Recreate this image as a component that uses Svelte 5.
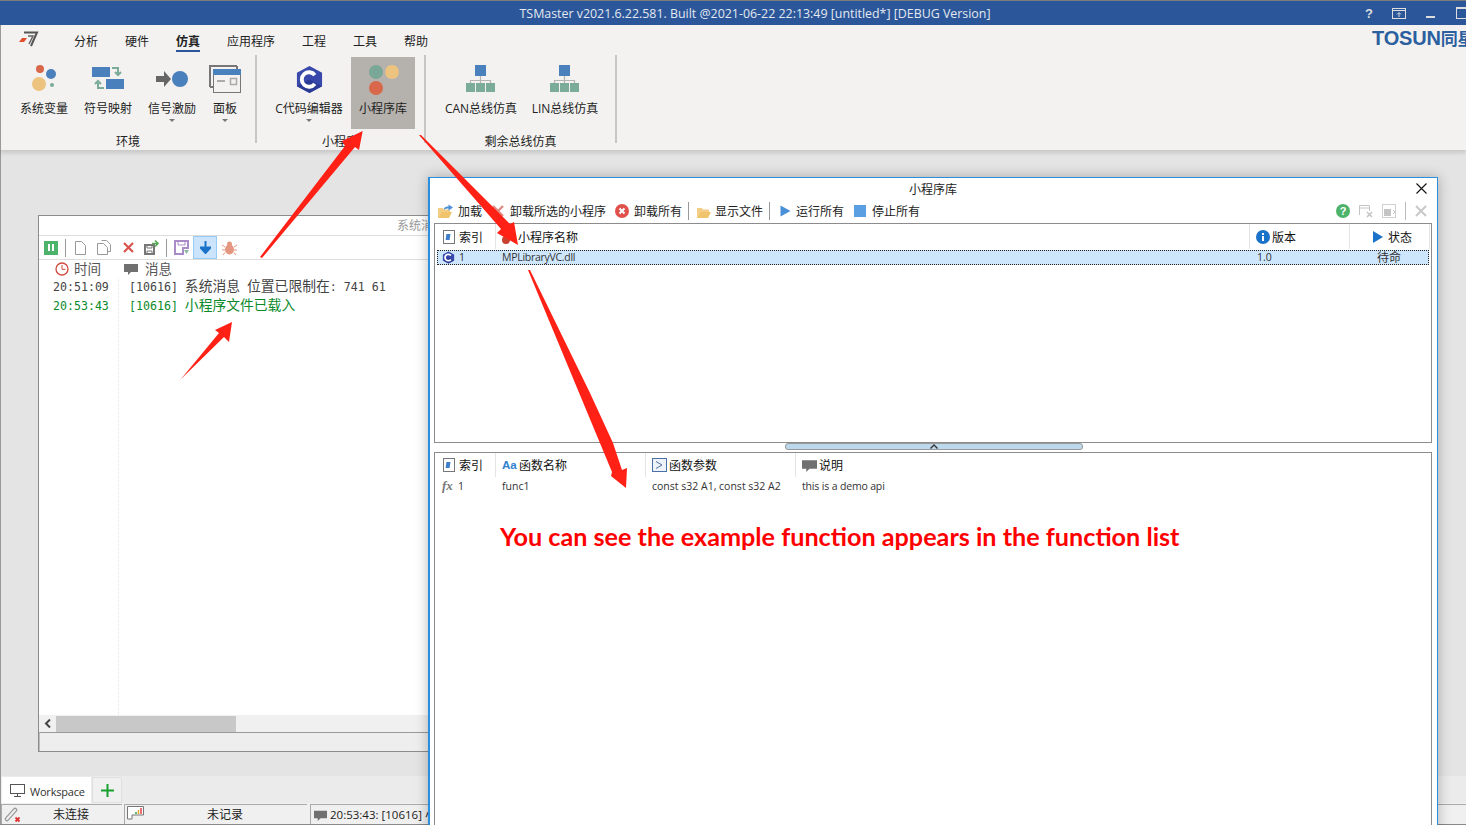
<script>
  const menu = ['分析', '硬件', '仿真', '应用程序', '工程', '工具', '帮助']
</script>

{#snippet network()}
  <svg class="ricon" viewBox="0 0 40 38">
    <path d="M19.5 16v7M9.5 27v-6.500h20V27M19.500 21v6" fill="none" stroke="#b4b4b4" stroke-width="1.200"/>
    <rect x="14" y="5" width="11" height="11" fill="#4a80bb"/>
    <rect x="5" y="23" width="9" height="9" fill="#7bab99"/>
    <rect x="15" y="23" width="9" height="9" fill="#7bab99"/>
    <rect x="25" y="23" width="9" height="9" fill="#7bab99"/>
  </svg>
{/snippet}

{#snippet cbadge(size)}
  <svg width={size} height={size} viewBox="0 0 28 30">
    <path d="M14 1l13 7v14l-13 7-13-7V8z" fill="#3949ab"/>
    <path d="M14 15l13 7-13 7-13-7z" fill="#2b3a94"/>
    <path d="M19.500 10.500A7.500 7.500 0 1 0 19.500 19.500" fill="none" stroke="#fff" stroke-width="4"/>
  </svg>
{/snippet}

{#snippet indexicon()}
  <svg width="12" height="14" viewBox="0 0 12 14">
    <rect x="0.500" y="0.500" width="11" height="13" fill="#fff" stroke="#777"/>
    <rect x="4" y="4" width="4" height="6" fill="#3f7fc9" transform="skewX(-8)"/>
  </svg>
{/snippet}

{#snippet folder(arrow)}
  <svg width="16" height="15" viewBox="0 0 16 15">
    <path d="M1 4h5l1 1.500h6V8H4L1 14z" fill="#f2cd85"/>
    <path d="M4 8h11l-3 6H1z" fill="#f0c46c"/>
    {#if arrow}<path d="M7 6c0-3 2-3.500 4.500-3.500V0.500L16 3.500l-4.500 3V4.500C10 4.500 8 4.800 7 6z" fill="#4a90d9"/>{/if}
  </svg>
{/snippet}

{#snippet bubble(w)}
  <svg width={w} height={w} viewBox="0 0 14 14"><path d="M0 2h14v8H7l-3 3v-3H0z" fill="#707070"/></svg>
{/snippet}

<div class="screen">
  <header class="titlebar">
    <span class="title">TSMaster v2021.6.22.581. Built @2021-06-22 22:13:49 [untitled*] [DEBUG Version]</span>
    <div class="winbtns">
      <b>?</b>
      <svg width="14" height="11" viewBox="0 0 14 11"><rect x="0.500" y="0.500" width="13" height="10" fill="none" stroke="#ddd"/><path d="M1 2.500h12M7 9V5M5 6.500l2-2 2 2" fill="none" stroke="#ddd"/></svg>
      <i class="minbtn"></i>
      <i class="maxbtn"></i>
    </div>
  </header>

  <nav class="menu">
    <svg class="applogo" width="20" height="16" viewBox="0 0 20 16">
      <path d="M5 1.500h13L12 15" fill="none" stroke="#555" stroke-width="2"/>
      <path d="M9 5h5l-4 8" fill="none" stroke="#666" stroke-width="1.500"/>
      <path d="M3 7h5L5 11H0z" fill="#e2502b"/>
    </svg>
    {#each menu as m}
      <span class="menuitem" class:active={m === '仿真'}>{m}</span>
    {/each}
    <span class="brand">TOSUN<span class="brandcjk">同星</span></span>
  </nav>

  <section class="ribbon">
    <div class="group g1">
      <div class="items">
        <div class="ritem w64">
          <svg class="ricon" viewBox="0 0 40 38">
            <circle cx="16" cy="9" r="4" fill="#d9674a"/><circle cx="27" cy="14" r="5" fill="#4a80bb"/>
            <circle cx="15" cy="24" r="7" fill="#ecc47f"/><circle cx="28" cy="25" r="2" fill="#7bab99"/>
          </svg>
          <span>系统变量</span>
        </div>
        <div class="ritem w64">
          <svg class="ricon" viewBox="0 0 40 38">
            <rect x="4" y="7" width="18" height="10" fill="#4a80bb"/><rect x="18" y="19" width="18" height="10" fill="#4a80bb"/>
            <path d="M24 8h6v6M27 12l3 3 3-3M16 28h-6v-5M7 24l3-3 3 3" fill="none" stroke="#7bab99" stroke-width="2"/>
          </svg>
          <span>符号映射</span>
        </div>
        <div class="ritem w64 caret">
          <svg class="ricon" viewBox="0 0 40 38">
            <path d="M4 16h8v-5l7 8-7 8v-5H4z" fill="#666"/><circle cx="28" cy="19" r="8" fill="#4a80bb"/>
          </svg>
          <span>信号激励</span>
        </div>
        <div class="ritem w42 caret">
          <svg class="ricon" viewBox="0 0 40 38">
            <path d="M5 27V6h27" fill="none" stroke="#777" stroke-width="2"/>
            <path d="M32 6v3M5 27h3" fill="none" stroke="#777" stroke-width="2"/>
            <rect x="8.500" y="9.500" width="27" height="23" fill="#f3f2f1" stroke="#777"/>
            <rect x="8" y="9" width="28" height="6" fill="#4a80bb"/>
            <path d="M12 21h8" stroke="#aaa" stroke-width="2"/>
            <rect x="25.500" y="18.500" width="6" height="6" fill="none" stroke="#aaa" stroke-width="1.500"/>
          </svg>
          <span>面板</span>
        </div>
      </div>
      <div class="glabel">环境</div>
    </div>
    <div class="group g2">
      <div class="items">
        <div class="ritem w78 caret">
          <span class="ricon cwrap">{@render cbadge(29)}</span>
          <span>C代码编辑器</span>
        </div>
        <div class="ritem w64 selected">
          <svg class="ricon" viewBox="0 0 40 38">
            <circle cx="13" cy="12" r="7" fill="#7aa896"/><circle cx="29" cy="12" r="7" fill="#ecc47f"/><circle cx="13" cy="28" r="7" fill="#d9674a"/>
          </svg>
          <span>小程序库</span>
        </div>
      </div>
      <div class="glabel">小程序</div>
    </div>
    <div class="group g3">
      <div class="items">
        <div class="ritem w86">{@render network()}<span>CAN总线仿真</span></div>
        <div class="ritem w82">{@render network()}<span>LIN总线仿真</span></div>
      </div>
      <div class="glabel">剩余总线仿真</div>
    </div>
  </section>

  <main class="workspace"></main>

  <div class="tabbar">
    <div class="tab">
      <svg width="15" height="13" viewBox="0 0 15 13"><rect x="0.500" y="0.500" width="14" height="9" fill="none" stroke="#555"/><path d="M7.500 10v2M4 12.500h7" stroke="#555"/></svg>
      <span class="tabtext">Workspace</span>
    </div>
    <div class="addtab">
      <svg width="13" height="13" viewBox="0 0 13 13"><path d="M6.500 0v13M0 6.500h13" stroke="#17a02c" stroke-width="2"/></svg>
    </div>
  </div>

  <footer class="statusbar">
    <div class="cell c1">
      <svg class="cellicon" width="18" height="17" viewBox="0 0 18 17">
        <path d="M3 13l8-9" stroke="#999" stroke-width="4.500" stroke-linecap="round"/><path d="M3 13l8-9" stroke="#f0f0f0" stroke-width="2" stroke-linecap="round"/>
        <path d="M11.500 11.500l4 4M15.500 11.500l-4 4" stroke="#d33" stroke-width="1.800"/>
      </svg>
      未连接
    </div>
    <div class="cell c2">
      <svg class="cellicon" width="17" height="15" viewBox="0 0 17 15">
        <path d="M0.500 13V0.500h16V9H5v4z" fill="#fff" stroke="#777"/>
        <path d="M9 8V6" stroke="#3a3" stroke-width="1.500"/><path d="M11.500 8V4" stroke="#e8a030" stroke-width="1.500"/><path d="M14 8V2" stroke="#d44" stroke-width="1.500"/>
      </svg>
      未记录
    </div>
    <div class="cell c3">{@render bubble(13)}<span>20:53:43: [10616] 小程序文件已载入</span></div>
  </footer>

  <!-- mdi child windows -->
  <div class="win syswin">
    <div class="wintitle">系统消息</div>
    <div class="logtools">
      <span class="pause"><i></i><i></i></span>
      <i class="vsep s1"></i>
      <svg class="t-doc" width="11" height="14" viewBox="0 0 11 14"><path d="M0.500 0.500h6l4 4v9h-10z" fill="#fff" stroke="#999"/></svg>
      <svg class="t-copy" width="14" height="15" viewBox="0 0 14 15"><path d="M4.500 0.500h5l4 4v7h-3" fill="#fff" stroke="#999"/><path d="M0.500 3.500h6l4 4v7h-10z" fill="#fff" stroke="#999"/></svg>
      <svg class="t-x" width="11" height="11" viewBox="0 0 11 11"><path d="M1 1l9 9M10 1l-9 9" stroke="#d9534f" stroke-width="2.200"/></svg>
      <svg class="t-exp" width="16" height="15" viewBox="0 0 16 15"><path d="M1 5h9v9H1z" fill="none" stroke="#777" stroke-width="2"/><path d="M3 5v3h5V5M3 14v-3h5v3" fill="none" stroke="#777"/><path d="M8 3.500h5M11 0.500l3 3-3 3" fill="none" stroke="#5aa85a" stroke-width="1.600"/></svg>
      <i class="vsep s2"></i>
      <svg class="t-save" width="16" height="16" viewBox="0 0 16 16"><path d="M1 1h13v7H9v6H1z" fill="none" stroke="#a98cc7" stroke-width="2"/><path d="M4 1v4h7V1" fill="none" stroke="#a98cc7"/><path d="M10 10h5l-2.500 4z" fill="#8fb8a5"/></svg>
      <span class="t-down"><svg width="11" height="13" viewBox="0 0 11 13"><path d="M5.500 0v8M0.500 6.500l5 5.500 5-5.500z" fill="#1b72c9" stroke="#1b72c9" stroke-width="2"/></svg></span>
      <svg class="t-bug" width="15" height="14" viewBox="0 0 15 14"><ellipse cx="7.500" cy="8.500" rx="4.500" ry="5" fill="#e59680"/><circle cx="7.500" cy="3" r="2.500" fill="#e59680"/><path d="M0 4l3 2M15 4l-3 2M0 9h3M15 9h-3M1 14l2-2.500M14 14l-2-2.500" stroke="#e59680"/></svg>
    </div>
    <div class="loghead">
      <span class="lh-time">
        <svg width="14" height="14" viewBox="0 0 14 14"><circle cx="7" cy="7" r="6" fill="#fff" stroke="#d2483c" stroke-width="1.300"/><path d="M7 3v4.300h3.500" fill="none" stroke="#d2483c"/></svg>
        时间
      </span>
      <span class="lh-msg">{@render bubble(14)}消息</span>
    </div>
    <div class="logbody">
      <div class="logtimes">
        <div class="logline">20:51:09</div>
        <div class="logline t-green">20:53:43</div>
      </div>
      <div class="logmsgs">
        <div class="logline">[10616] <span class="cjk">系统消息</span> <span class="cjk">位置已限制在</span>: 741 61</div>
        <div class="logline t-green">[10616] <span class="cjk">小程序文件已载入</span></div>
      </div>
    </div>
    <div class="hscroll">
      <svg width="7" height="9" viewBox="0 0 7 9"><path d="M6 0.500L2 4.500l4 4" fill="none" stroke="#444" stroke-width="2"/></svg>
      <i class="thumb"></i>
    </div>
    <div class="winfoot"></div>
  </div>

  <div class="win libwin">
    <div class="libtitle">
      <span>小程序库</span>
      <svg class="closex" width="11" height="11" viewBox="0 0 11 11"><path d="M0.500 0.500l10 10M10.500 0.500l-10 10" stroke="#111" stroke-width="1.100"/></svg>
    </div>
    <div class="libtools">
      <span class="tool first">{@render folder(true)}加载</span>
      <span class="tool unload">
        <svg width="12" height="12" viewBox="0 0 12 12"><path d="M1 1l10 10M11 1L1 11" stroke="#e08a80" stroke-width="2.400"/></svg>
        卸载所选的小程序
      </span>
      <span class="tool">
        <svg width="14" height="14" viewBox="0 0 14 14"><circle cx="7" cy="7" r="7" fill="#e0514b"/><path d="M4.500 4.500l5 5M9.500 4.500l-5 5" stroke="#fff" stroke-width="2"/></svg>
        卸载所有
      </span>
      <i class="tsep"></i>
      <span class="tool showfile">{@render folder(false)}显示文件</span>
      <i class="tsep wide"></i>
      <span class="tool run">
        <svg width="11" height="12" viewBox="0 0 11 12"><path d="M0.500 0.500L10.500 6 0.500 11.500z" fill="#4a90d9"/></svg>
        运行所有
      </span>
      <span class="tool stop">
        <svg width="12" height="12" viewBox="0 0 12 12"><rect width="12" height="12" fill="#5b9fe3"/></svg>
        停止所有
      </span>
      <span class="rtools">
        <svg width="14" height="14" viewBox="0 0 14 14"><circle cx="7" cy="7" r="7" fill="#4db36a"/><text x="7" y="11" text-anchor="middle" fill="#fff" font-size="11" font-weight="700" font-family="Liberation Sans">?</text></svg>
        <svg width="14" height="14" viewBox="0 0 14 14"><path d="M0.500 11V1.500h10V7M0.500 4h10" fill="none" stroke="#c4c4c4"/><path d="M8 8l5 5M13 8l-5 5" stroke="#c4c4c4" stroke-width="1.500"/></svg>
        <svg width="14" height="14" viewBox="0 0 14 14"><rect x="0.500" y="0.500" width="13" height="13" fill="none" stroke="#d0d0d0"/><rect x="2" y="5" width="7" height="7" fill="#c4c4c4"/><path d="M11 6l2 2-2 2" fill="none" stroke="#c4c4c4"/></svg>
        <i class="tsep gray"></i>
        <svg width="12" height="12" viewBox="0 0 12 12"><path d="M1 1l10 10M11 1L1 11" stroke="#c8c8c8" stroke-width="2"/></svg>
      </span>
    </div>

    <div class="table top">
      <div class="thead row1">
        <div class="th">{@render indexicon()}索引</div>
        <div class="th pname">
          <svg width="16" height="14" viewBox="0 0 16 14"><circle cx="11" cy="5" r="4" fill="#f6b93b"/><circle cx="6" cy="10" r="4" fill="#c9402f"/></svg>
          小程序名称
        </div>
        <div class="th">
          <svg width="14" height="14" viewBox="0 0 14 14"><circle cx="7" cy="7" r="7" fill="#1b72c9"/><path d="M7 6v5M7 3v2" stroke="#fff" stroke-width="2"/></svg>
          版本
        </div>
        <div class="th pstate">
          <svg width="10" height="12" viewBox="0 0 10 12"><path d="M0 0l10 6-10 6z" fill="#1b72c9"/></svg>
          状态
        </div>
      </div>
      <div class="selrow row1">
        <div class="td idx">{@render cbadge(13)}1</div>
        <div class="td dll">MPLibraryVC.dll</div>
        <div class="td ver">1.0</div>
        <div class="td state">待命</div>
      </div>
    </div>

    <div class="splitter"><div class="grip"><svg width="8" height="5" viewBox="0 0 8 5"><path d="M0.500 4.500L4 1l3.500 3.500" fill="none" stroke="#333" stroke-width="1.400"/></svg></div></div>

    <div class="table bottom">
      <div class="thead row2">
        <div class="th">{@render indexicon()}索引</div>
        <div class="th"><b class="aa">Aa</b>函数名称</div>
        <div class="th">
          <svg width="15" height="14" viewBox="0 0 15 14"><rect x="0.500" y="0.500" width="14" height="13" fill="#eef3fa" stroke="#4a6fa5"/><path d="M4 3.500L10 7l-6 3.500" fill="none" stroke="#4a6fa5"/></svg>
          函数参数
        </div>
        <div class="th">{@render bubble(15)}说明</div>
      </div>
      <div class="fnrow row2">
        <div class="td idx"><em class="fx">fx</em>1</div>
        <div class="td">func1</div>
        <div class="td">const s32 A1, const s32 A2</div>
        <div class="td api">this is a demo api</div>
      </div>
    </div>
  </div>

  <!-- annotations drawn on top of the screenshot -->
  <svg class="arrows" width="1466" height="825" viewBox="0 0 1466 825">
    <polygon points="260,257 345,146 342,141 362.700,131 359,150 355,147 262,258"/>
    <polygon points="419,135 501,229 497,233 518,245 514,222 510,224 421,135"/>
    <polygon points="179,381 224,337 229,342 232,322 215,330 219,333 181,379"/>
    <polygon points="528,270 612,472 611,476 626,488 627,468 622,470 613,443 590,393 530,270"/>
  </svg>
  <div class="caption">You can see the example function appears in the function list</div>
</div>

<style>
  :global(body) {
    margin: 0;
    overflow: hidden;
  }
  .screen {
    position: relative;
    display: flex;
    flex-direction: column;
    width: 1466px;
    height: 825px;
    overflow: hidden;
    background: #e4e4e4;
    font: 12px "Open Sans", "Noto Sans CJK SC", sans-serif;
    color: #222;
  }
  .titlebar {
    flex: 0 0 25px;
    box-sizing: border-box;
    border-top: 1px solid #7d7d7d;
    background: #2b579a;
    display: flex;
    align-items: center;
    justify-content: center;
    color: #e4e8f0;
    font-size: 12.400px;
    position: relative;
  }
  .title {
    margin-left: 44px;
  }
  .winbtns {
    position: absolute;
    left: 1365px;
    top: 0;
    height: 24px;
    display: flex;
    align-items: center;
  }
  .winbtns b {
    font: 700 13px "Liberation Sans", sans-serif;
    color: #ddd;
    width: 27px;
  }
  .winbtns svg {
    margin-right: 19px;
  }
  .minbtn {
    flex: none;
    width: 9px;
    height: 2px;
    background: #ddd;
    margin: 8px 21px 0 1px;
  }
  .maxbtn {
    width: 11px;
    height: 9px;
    flex: none;
    border: 1px solid #ddd;
    border-top-width: 2px;
  }
  .menu {
    flex: 0 0 27px;
    background: #f3f2f1;
    display: flex;
    align-items: center;
    gap: 27px;
    padding-left: 73px;
    position: relative;
    overflow: hidden;
    font-size: 12px;
    border-left: 1px solid #999;
    box-sizing: border-box;
  }
  .applogo {
    position: absolute;
    left: 18px;
    top: 6px;
  }
  .menuitem {
    line-height: 34px;
    height: 27px;
    flex: none;
    position: relative;
  }
  .menuitem.active {
    font-weight: 700;
  }
  .menuitem.active::after {
    content: "";
    position: absolute;
    left: 0;
    right: 0;
    bottom: 0;
    height: 2px;
    background: #2b579a;
  }
  .brand {
    flex: none;
    margin-left: -27px;
    transform: translateX(944px);
    margin-top: -2px;
    font: 700 20px "Liberation Sans", "Noto Sans CJK SC", sans-serif;
    color: #2b5f9e;
    letter-spacing: -0.200px;
  }
  .brandcjk {
    font-size: 17px;
  }
  .ribbon {
    flex: 0 0 98px;
    background: #f3f2f1;
    display: flex;
    box-sizing: border-box;
    padding-top: 3px;
    border-left: 1px solid #999;
    box-shadow: 0 3px 4px rgba(0, 0, 0, 0.12);
    position: relative;
  }
  .group {
    height: 88px;
    border-right: 2px solid #c6c6c6;
    display: flex;
    flex-direction: column;
    align-items: flex-start;
    box-sizing: border-box;
  }
  .g1 {
    width: 256px;
    padding-left: 11px;
  }
  .g2 {
    width: 169px;
    padding-left: 13px;
  }
  .g3 {
    width: 191px;
    padding-left: 12px;
  }
  .items {
    display: flex;
    flex: none;
    height: 72px;
    margin-top: 2px;
    gap: 0;
  }
  .g2 .items {
    gap: 3px;
  }
  .ritem {
    height: 72px;
    display: flex;
    flex-direction: column;
    align-items: center;
    position: relative;
    line-height: 16px;
    white-space: nowrap;
  }
  .w42 { width: 42px; }
  .w64 { width: 64px; }
  .w78 { width: 78px; }
  .w82 { width: 82px; }
  .w86 { width: 86px; }
  .ritem.selected {
    background: #b5b1ac;
  }
  .ricon {
    width: 40px;
    height: 38px;
    margin-top: 3px;
    margin-bottom: 3px;
    flex: none;
  }
  .cwrap {
    display: flex;
    align-items: flex-start;
    justify-content: center;
    padding-top: 5px;
    box-sizing: border-box;
  }
  .caret::after {
    content: "";
    position: absolute;
    left: calc(50% - 3px);
    top: 62px;
    border: 3px solid transparent;
    border-top: 3px solid #777;
    border-bottom: 0;
  }
  .glabel {
    flex: none;
    align-self: stretch;
    text-align: center;
    line-height: 18px;
    margin-top: 4px;
  }
  .g1 .glabel { padding-right: 11px; }
  .g2 .glabel { padding-right: 14px; }
  .g3 .glabel { padding-right: 12px; }
  .workspace {
    flex: 1;
    border-left: 1px solid #999;
  }
  .tabbar {
    flex: 0 0 27px;
    background: #ebebeb;
    display: flex;
    padding-left: 1px;
    border-left: 1px solid #999;
    box-sizing: border-box;
    padding-top: 1px;
  }
  .tab {
    width: 89px;
    background: #fff;
    display: flex;
    align-items: center;
    gap: 5px;
    padding-left: 8px;
    box-sizing: border-box;
    font-size: 11px;
    letter-spacing: -0.200px;
    color: #333;
  }
  .tabtext {
    padding-top: 3px;
  }
  .addtab {
    width: 30px;
    margin-left: 1px;
    background: #f0f0f0;
    border: 1px solid #e0e0e0;
    box-sizing: border-box;
    display: flex;
    align-items: center;
    justify-content: center;
  }
  .statusbar {
    flex: 0 0 20px;
    display: flex;
    background: #f0f0f0;
    border-left: 1px solid #999;
    border-bottom: 1px solid #888;
    box-sizing: border-box;
    gap: 2px;
    padding-top: 1px;
  }
  .cell {
    position: relative;
    border-top: 1px solid #aaa;
    border-left: 1px solid #aaa;
    box-sizing: border-box;
    display: flex;
    align-items: center;
    justify-content: center;
    line-height: 18px;
    padding-top: 1px;
  }
  .c1 { width: 121px; padding-left: 18px; }
  .c2 { width: 183px; padding-left: 18px; }
  .c3 {
    margin-left: 1px;
    flex: 1;
    justify-content: flex-start;
    padding-left: 3px;
    gap: 3px;
    font-size: 11.500px;
    white-space: nowrap;
  }
  .cellicon {
    position: absolute;
    left: 2px;
    top: 1px;
  }
  .win {
    position: absolute;
    box-sizing: border-box;
    background: #fff;
    display: flex;
    flex-direction: column;
  }
  .syswin {
    left: 38px;
    top: 215px;
    width: 766px;
    height: 537px;
    border: 1px solid #8c8c8c;
  }
  .wintitle {
    flex: 0 0 20px;
    box-sizing: border-box;
    text-align: center;
    line-height: 19px;
    color: #999;
    border-bottom: 1px solid #ddd;
  }
  .logtools {
    flex: 0 0 24px;
    box-sizing: border-box;
    border-bottom: 1px solid #ddd;
    display: flex;
    align-items: center;
    padding-left: 5px;
  }
  .logtools > * {
    flex: none;
  }
  .pause {
    width: 14px;
    height: 14px;
    background: #4db36a;
    display: flex;
    align-items: center;
    justify-content: center;
    gap: 2px;
  }
  .pause i {
    width: 2px;
    height: 7px;
    background: #fff;
  }
  .vsep {
    width: 1px;
    height: 18px;
    background: #999;
  }
  .s1 { margin: 0 9px 0 7px; }
  .t-copy { margin-left: 11px; }
  .t-x { margin-left: 12px; }
  .t-exp { margin-left: 10px; }
  .s2 { margin: 0 7px 0 6px; }
  .t-down {
    margin-left: 3px;
    width: 24px;
    height: 23px;
    box-sizing: border-box;
    background: #cce4fb;
    border: 1px solid #99ccf5;
    display: flex;
    align-items: center;
    justify-content: center;
  }
  .t-bug { margin-left: 5px; }
  .loghead {
    flex: 0 0 18px;
    display: flex;
    align-items: center;
    font-size: 13.500px;
    line-height: 18px;
    color: #555;
  }
  .lh-time {
    width: 85px;
    padding-left: 16px;
    box-sizing: border-box;
    display: flex;
    align-items: center;
    gap: 5px;
  }
  .lh-msg {
    display: flex;
    align-items: center;
    gap: 7px;
  }
  .logbody {
    flex: 1;
    display: flex;
    font: 11.600px/19px "DejaVu Sans Mono", "Noto Sans CJK SC", monospace;
    color: #444;
  }
  .logtimes {
    width: 80px;
    box-sizing: border-box;
    padding-left: 14px;
    border-right: 1px dotted #e6e6e6;
    white-space: nowrap;
  }
  .logmsgs {
    padding-left: 10px;
    white-space: nowrap;
  }
  .logline {
    height: 19px;
  }
  .cjk {
    font-family: "Noto Sans CJK SC", sans-serif;
    font-size: 13.800px;
    line-height: 1;
  }
  .t-green {
    color: #0a8a2a;
  }
  .hscroll {
    flex: 0 0 17px;
    background: #f0f0f0;
    display: flex;
    align-items: center;
    padding-left: 5px;
  }
  .thumb {
    width: 180px;
    height: 16px;
    margin-left: 5px;
    background: #c8c8c8;
  }
  .winfoot {
    flex: 0 0 18px;
    background: #eee;
    border-top: 1px solid #999;
    border-left: 1px solid #bbb;
  }
  .libwin {
    left: 428px;
    top: 177px;
    width: 1010px;
    height: 660px;
    border: 1px solid #2b8fe0;
    border-left-width: 2px;
    box-shadow: 0 0 12px rgba(0, 0, 0, 0.28);
    padding: 0 5px 0 4px;
  }
  .libtitle {
    flex: 0 0 21px;
    display: flex;
    align-items: center;
    justify-content: center;
    position: relative;
  }
  .closex {
    position: absolute;
    right: 5px;
    top: 5px;
  }
  .libtools {
    flex: 0 0 24px;
    display: flex;
    align-items: center;
    white-space: nowrap;
  }
  .tool {
    display: flex;
    align-items: center;
    gap: 5px;
    margin-right: 9px;
    flex: none;
  }
  .tool.first {
    margin-left: 3px;
    margin-right: 10px;
  }
  .tool.unload {
    gap: 6px;
  }
  .tool.showfile {
    gap: 3px;
  }
  .tool.run {
    margin-right: 10px;
  }
  .tool.stop {
    gap: 6px;
  }
  .tsep {
    width: 1px;
    height: 18px;
    background: #999;
    margin-right: 7px;
    margin-left: -3px;
    flex: none;
  }
  .tsep.wide {
    margin-right: 10px;
  }
  .rtools {
    margin-left: auto;
    display: flex;
    align-items: center;
    gap: 9px;
    padding-right: 5px;
  }
  .tsep.gray {
    background: #bbb;
    margin: 0;
  }
  .table {
    border: 1px solid #8c8c8c;
    box-sizing: border-box;
    background: #fff;
  }
  .top {
    flex: 0 0 220px;
  }
  .bottom {
    flex: 1;
  }
  .row1,
  .row2 {
    display: grid;
    grid-template-columns: 61px 754px 100px 80px;
  }
  .row2 {
    grid-template-columns: 61px 150px 150px 1fr;
  }
  .thead {
    height: 24px;
  }
  .thead.row1 {
    height: 25px;
  }
  .th {
    display: flex;
    align-items: center;
    gap: 4px;
    padding-left: 8px;
    border-right: 1px solid #e4e4e4;
    height: 24px;
    color: #111;
    white-space: nowrap;
  }
  .row1 .th {
    padding-top: 1px;
    height: 25px;
    box-sizing: border-box;
  }
  .row2 .th {
    padding-left: 6px;
    gap: 2px;
  }
  .row2 .th:first-child {
    padding-left: 8px;
    gap: 4px;
  }
  .row2 .th:last-child {
    border-right: 0;
  }
  .row1 .th:nth-child(2) {
    padding-left: 4px;
    gap: 2px;
  }
  .row1 .th:nth-child(3) {
    padding-left: 6px;
    gap: 2px;
  }
  .row1 .th.pstate {
    padding-left: 23px;
    gap: 5px;
  }
  .selrow {
    height: 15px;
    margin: 1px 2px 0 2px;
    background: #cde6fb;
    outline: 1px dotted #222;
    outline-offset: -1px;
    grid-template-columns: 59px 754px 100px 79px;
  }
  .td {
    padding-left: 6px;
    font-size: 10.500px;
    line-height: 15px;
    color: #333;
    white-space: nowrap;
    display: flex;
    align-items: center;
  }
  .td.idx {
    gap: 4px;
    padding-left: 5px;
  }
  .fnrow {
    height: 18px;
  }
  .fnrow .td {
    line-height: 18px;
  }
  .fnrow .td.idx {
    padding-left: 7px;
  }
  .td.dll {
    letter-spacing: -0.280px;
  }
  .td.api {
    letter-spacing: -0.160px;
  }
  .td.ver {
    padding-left: 7px;
  }
  .td.state {
    padding-left: 27px;
    font-size: 12px;
  }
  .splitter {
    flex: 0 0 9px;
    position: relative;
    display: flex;
    justify-content: center;
  }
  .grip {
    width: 298px;
    height: 7px;
    box-sizing: border-box;
    margin-right: -1px;
    background: #bcd8ec;
    border: 1px solid #9a9a9a;
    border-radius: 3px;
    display: flex;
    justify-content: center;
    align-items: center;
  }
  .aa {
    color: #2f7fd1;
    font: 700 11.500px "Liberation Sans", sans-serif;
    width: 15px;
  }
  .fx {
    font: italic 700 13px "Liberation Serif", serif;
    color: #777;
    width: 12px;
  }
  .arrows {
    position: absolute;
    left: 0;
    top: 0;
    pointer-events: none;
  }
  .arrows polygon {
    fill: #ff2116;
  }
  .caption {
    position: absolute;
    left: 500px;
    top: 521px;
    font: 700 25.200px "Lato", sans-serif;
    color: #f00;
    white-space: nowrap;
  }
</style>
